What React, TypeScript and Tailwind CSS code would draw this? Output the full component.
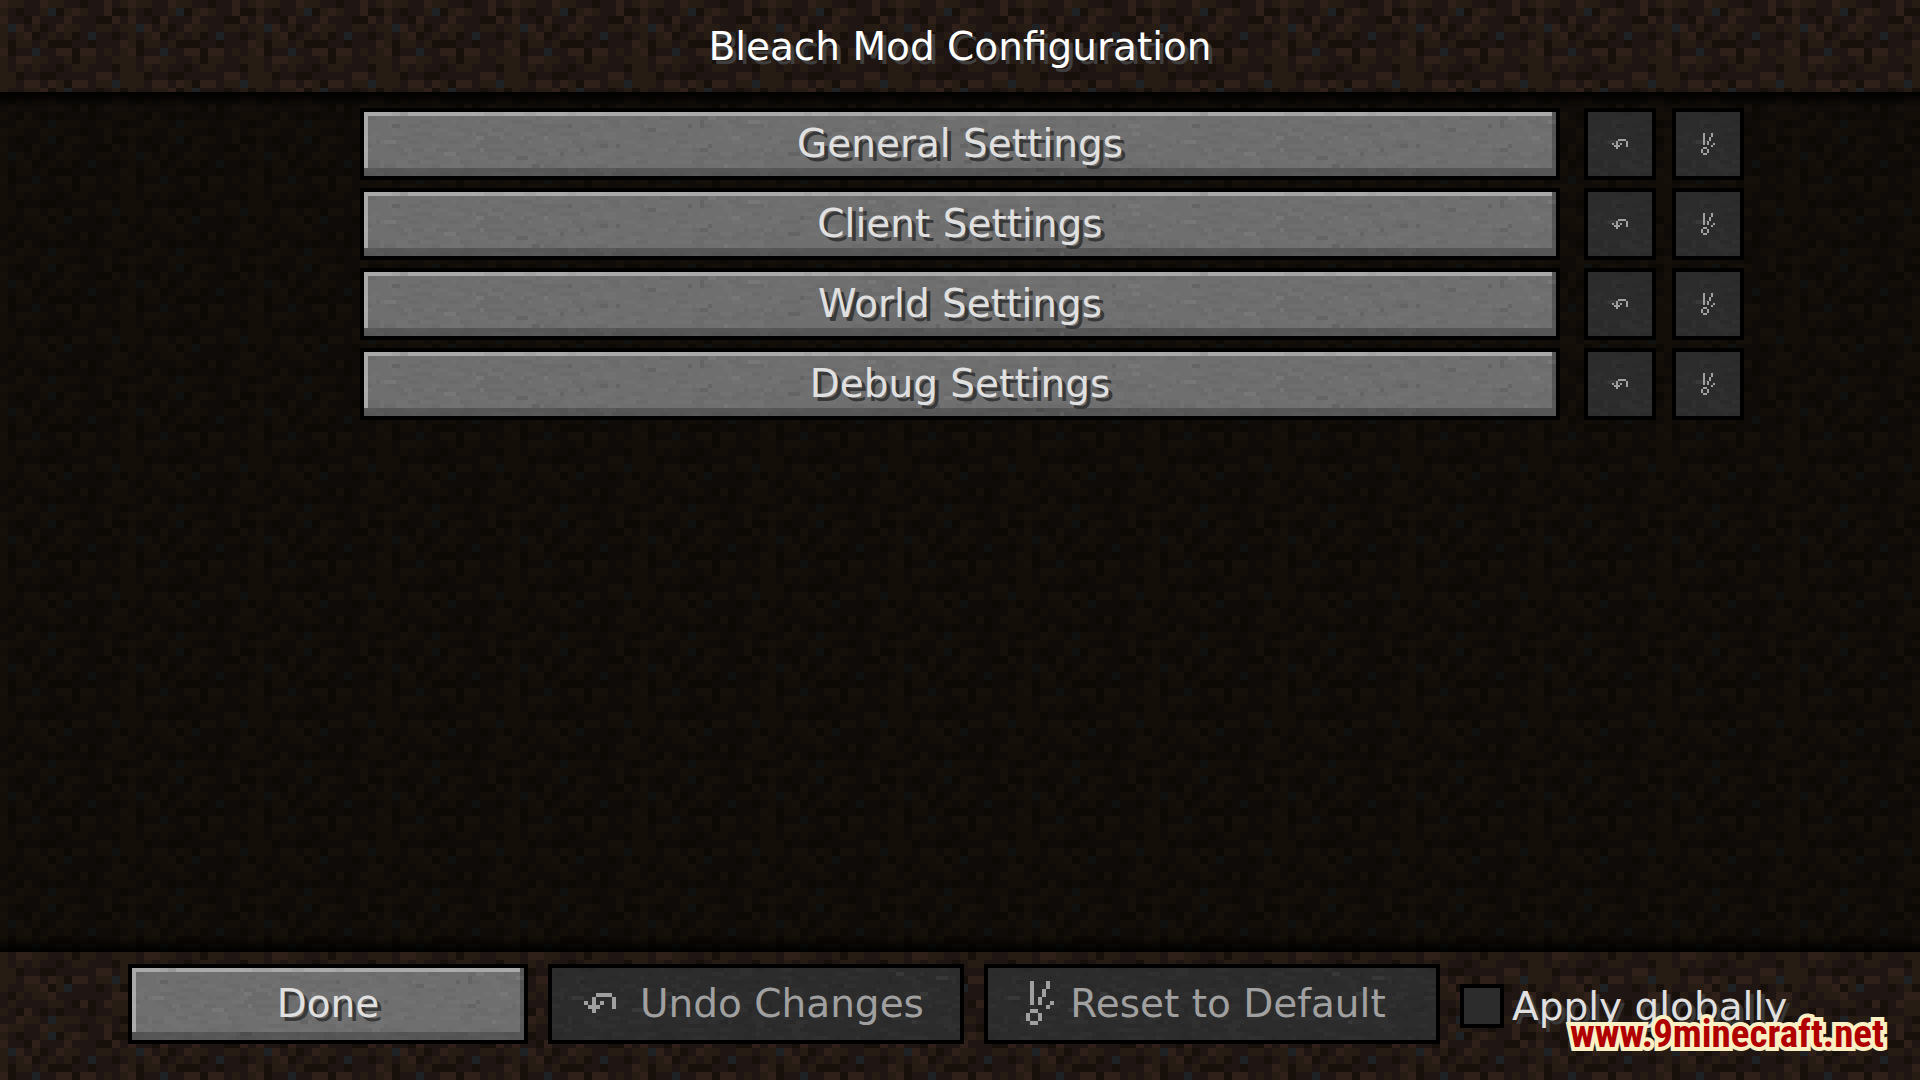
import type { ReactNode } from "react";

const DIRT = [
  "LMMDDLMMDDKDDLDM",
  "MDKDDMBKMLMDDLKK",
  "LDDKLDDDLDDDKKLD",
  "MBLDMKDLMMDDMMDM",
  "MDMLKDMDMKDBDDKD",
  "MKMMDMKKKDDKDDDL",
  "LKDDBDDLLKLLDMDM",
  "MDLLMMDDMKMMDDMM",
  "MDMDMDDKDMMDDDKM",
  "MMKDDKKDDDDDLLDM",
  "MMDLLDLMKLLDMMBM",
  "MDDMMLKMBDDDKDMK",
  "DKMDMMLDDDDDDDLL",
  "DMDDDDMMDKLKDLMM",
  "MDKLDKDKDDDKDDMM",
  "DDLMMDBMMMDDMMDK",
];

const DIRT_COLORS: Record<string, string> = {
  K: "#170f0a",
  D: "#1f1512",
  M: "#271c13",
  L: "#2f2119",
  B: "#1e2224",
};

const UNDO = ["...####.", "..#....#", "#.#.#..#", ".###...#", "..#....."];

const RESET = [
  ".#...#.",
  ".#...#.",
  ".#..#..",
  ".#..#..",
  ".#.#...",
  ".#.#..#",
  ".....#.",
  ".##....",
  "#..#...",
  "#..#...",
  ".##....",
];

function cellsPath(rows: string[], mark: string) {
  let d = "";
  rows.forEach((row, y) => {
    for (let x = 0; x < row.length; x++) {
      if (row[x] === mark) d += `M${x} ${y}h1v1h-1z`;
    }
  });
  return d;
}

function buildSpeckles() {
  const tones = ["", "", "", ""];
  let seed = 20117;
  const next = () => {
    seed = (seed * 1103515245 + 12345) % 2147483648;
    return seed / 2147483648;
  };
  for (let y = 0; y < 20; y++) {
    let x = 0;
    while (x < 200) {
      const r = next();
      const run = 1 + Math.floor(next() * 3);
      const cell = `M${x} ${y}h${run}v1h-${run}z`;
      if (r < 0.02) tones[0] += cell;
      else if (r < 0.2) tones[1] += cell;
      else if (r > 0.98) tones[3] += cell;
      else if (r > 0.8) tones[2] += cell;
      x += run;
    }
  }
  return tones;
}

const SPECKLES = buildSpeckles();

function Textures() {
  return (
    <svg className="absolute h-0 w-0" aria-hidden="true">
      <defs>
        <pattern id="dirt" width="16" height="16" patternUnits="userSpaceOnUse" patternTransform="scale(8)">
          {Object.entries(DIRT_COLORS).map(([k, color]) => (
            <path key={k} d={cellsPath(DIRT, k)} fill={color} />
          ))}
        </pattern>
        <pattern id="stone" width="200" height="20" patternUnits="userSpaceOnUse" patternTransform="scale(4)">
          <path d={SPECKLES[0]} fill="#000" fillOpacity="0.1" />
          <path d={SPECKLES[1]} fill="#000" fillOpacity="0.04" />
          <path d={SPECKLES[2]} fill="#fff" fillOpacity="0.02" />
          <path d={SPECKLES[3]} fill="#fff" fillOpacity="0.06" />
        </pattern>
      </defs>
    </svg>
  );
}

function Fill({ id, className = "" }: { id: "dirt" | "stone"; className?: string }) {
  return (
    <svg
      className={`pointer-events-none absolute inset-0 h-full w-full ${className}`}
      shapeRendering="crispEdges"
      aria-hidden="true"
    >
      <rect width="100%" height="100%" fill={id === "dirt" ? "url(#dirt)" : "url(#stone)"} />
    </svg>
  );
}

function PixelIcon({ rows, className }: { rows: string[]; className: string }) {
  return (
    <svg
      viewBox={`0 0 ${rows[0].length} ${rows.length}`}
      className={className}
      shapeRendering="crispEdges"
      fill="currentColor"
      aria-hidden="true"
    >
      <path d={cellsPath(rows, "#")} />
    </svg>
  );
}

function StoneButton({ className, children }: { className: string; children: ReactNode }) {
  return (
    <button
      type="button"
      className={`relative flex items-center justify-center border-4 border-black bg-[#6f6f6f] pb-0.5 text-[39px] leading-none whitespace-nowrap text-[#e0e0e0] shadow-[inset_0_-8px_#565656,inset_-4px_0_#565656,inset_0_4px_#a9a9a9,inset_4px_0_#a9a9a9] ${className}`}
    >
      <Fill id="stone" />
      <span className="relative [text-shadow:4px_4px_0_#383838]">{children}</span>
    </button>
  );
}

function DisabledButton({ className, label, children }: { className: string; label?: string; children: ReactNode }) {
  return (
    <button
      type="button"
      disabled
      aria-label={label}
      className={`relative flex items-center justify-center border-4 border-black bg-[#2c2c2c] text-[39px] leading-none whitespace-nowrap text-[#a0a0a0] ${className}`}
    >
      <Fill id="stone" />
      {children}
    </button>
  );
}

const CATEGORIES = ["General Settings", "Client Settings", "World Settings", "Debug Settings"];

export default function App() {
  return (
    <div className="relative isolate flex min-h-screen flex-col overflow-hidden bg-[#231811] font-['DejaVu_Sans',sans-serif]">
      <Textures />
      <Fill id="dirt" className="-z-10" />

      <header className="flex h-[92px] items-center justify-center">
        <h1 className="text-[39px] leading-none whitespace-nowrap text-white [text-shadow:4px_4px_0_#3f3f3f]">
          Bleach Mod Configuration
        </h1>
      </header>

      <main className="relative flex-1 bg-[#030300]/57 pt-4 pr-44 pl-[360px]">
        <div className="pointer-events-none absolute inset-x-0 top-0 h-4 bg-linear-to-b from-black to-transparent" />
        <div className="pointer-events-none absolute inset-x-0 bottom-0 h-4 bg-linear-to-t from-black to-transparent" />
        <ul className="relative flex flex-col gap-2">
          {CATEGORIES.map((name) => (
            <li key={name} className="flex">
              <StoneButton className="h-[72px] flex-1">{name}</StoneButton>
              <DisabledButton className="ml-6 h-[72px] w-[72px]" label={`Undo changes in ${name}`}>
                <PixelIcon rows={UNDO} className="relative h-[10px] w-4" />
              </DisabledButton>
              <DisabledButton className="ml-4 h-[72px] w-[72px]" label={`Reset ${name}`}>
                <PixelIcon rows={RESET} className="relative h-[22px] w-[14px]" />
              </DisabledButton>
            </li>
          ))}
        </ul>
      </main>

      <footer className="relative flex h-32 items-start gap-5 px-32 pt-3">
        <StoneButton className="h-20 w-[400px]">Done</StoneButton>
        <DisabledButton className="h-20 w-[416px] gap-6 pr-1 pb-0.5">
          <PixelIcon rows={UNDO} className="relative h-5 w-8" />
          <span className="relative">Undo Changes</span>
        </DisabledButton>
        <DisabledButton className="h-20 w-[456px] gap-4 pr-3 pb-0.5">
          <PixelIcon rows={RESET} className="relative h-11 w-7" />
          <span className="relative">Reset to Default</span>
        </DisabledButton>
        <div className="flex h-[84px] items-center gap-1">
          <input
            id="apply-globally"
            type="checkbox"
            className="h-11 w-11 shrink-0 appearance-none border-4 border-black bg-[#2c2c2c] checked:bg-[#a0a0a0]"
          />
          <label
            htmlFor="apply-globally"
            className="pl-1 text-[39px] leading-none whitespace-nowrap text-[#e0e0e0] [text-shadow:4px_4px_0_#383838]"
          >
            Apply globally
          </label>
        </div>
        <a
          href="#9minecraft"
          className="absolute right-9 bottom-[26px] font-['Roboto_Condensed',Roboto,sans-serif] text-[39px] leading-none font-bold whitespace-nowrap text-[#b00000] [-webkit-text-stroke:8px_#faf0c4] [paint-order:stroke_fill]"
        >
          www.9minecraft.net
        </a>
      </footer>
    </div>
  );
}
